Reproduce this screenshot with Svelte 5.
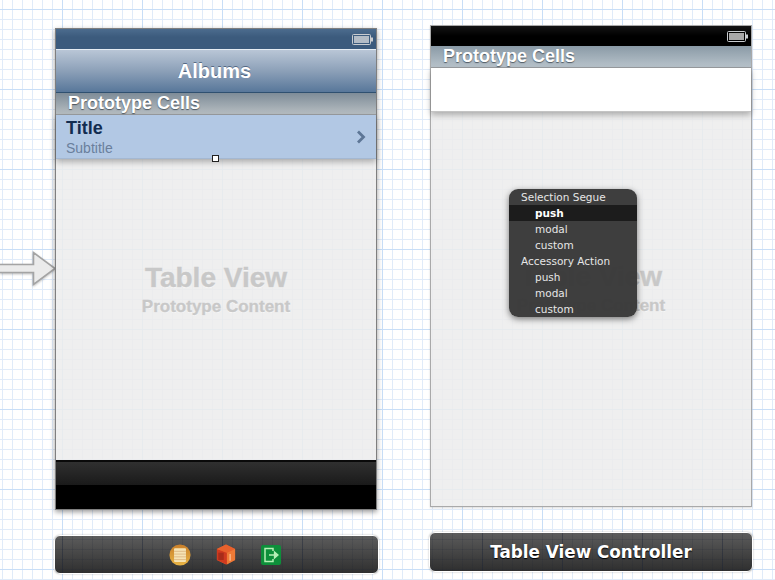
<script>
  const sections = [
    { title: "Selection Segue", items: ["push", "modal", "custom"] },
    { title: "Accessory Action", items: ["push", "modal", "custom"] },
  ];
  let active = "Selection Segue-push";
</script>

{#snippet battery(fill)}
  <svg class="battery" width="21" height="11" viewBox="0 0 21 11">
    <rect x="0.5" y="0.5" width="18" height="10" rx="1" fill="none" stroke="#c9ccd0" />
    <rect x="2" y="2" width="15" height="7" fill={fill} />
    <rect x="19" y="3.5" width="2" height="4" fill="#c9ccd0" />
  </svg>
{/snippet}

<div class="canvas">
  <svg class="entry-arrow" width="58" height="42" viewBox="0 0 58 42">
    <path
      d="M-2 14.5H33.5V2.5L55 18.5 33.5 34.5V22.5H-2Z"
      fill="#ebebeb"
      stroke="#a4a4a4"
      stroke-width="1.6"
    />
  </svg>

  <section class="scene albums">
    <div class="status blue">{@render battery("#b3bcc6")}</div>
    <div class="nav">Albums</div>
    <div class="section-head">Prototype Cells</div>
    <div class="cell selected">
      <div class="cell-text">
        <div class="cell-title">Title</div>
        <div class="cell-sub">Subtitle</div>
      </div>
      <svg width="10" height="14" viewBox="0 0 10 14">
        <path d="M2 1.5 7.5 7 2 12.5" fill="none" stroke="#5d7696" stroke-width="2.8" />
      </svg>
      <span class="handle"></span>
    </div>
    <div class="table">
      <div class="watermark">
        <div class="wm-big">Table View</div>
        <div class="wm-small">Prototype Content</div>
      </div>
    </div>
    <div class="tabbar"></div>
    <div class="tabbar-bottom"></div>
  </section>

  <div class="dock first">
    <svg width="22" height="22" viewBox="0 0 24 24">
      <defs>
        <linearGradient id="coin" x1="0" y1="0" x2="0" y2="1">
          <stop offset="0" stop-color="#c97f2a" />
          <stop offset="1" stop-color="#e8b445" />
        </linearGradient>
      </defs>
      <circle cx="12" cy="12" r="11.5" fill="url(#coin)" />
      <rect x="5.5" y="4.5" width="13" height="15" rx="1" fill="#f6e3b4" />
      <path d="M5.5 8H18.5M5.5 11H18.5M5.5 14H18.5M5.5 17H18.5" stroke="#dcb884" stroke-width="1" />
    </svg>
    <svg width="20" height="23" viewBox="0 0 22 24">
      <path d="M11 1 21 6V18L11 23 1 18V6Z" fill="#e2562a" />
      <path d="M1 6 12 10V23L1 18Z" fill="#cf3a1f" />
      <path d="M11 1 21 6 12 10 1 6Z" fill="#e8612c" />
      <path d="M12 10 21 6V18L12 23Z" fill="#ee7a36" />
      <rect x="2.5" y="10" width="6" height="8" fill="#a82c1a" />
      <path d="M15.5 11.5V19" stroke="#ffc9a0" stroke-width="1.2" />
    </svg>
    <svg width="20" height="20" viewBox="1 1 20 20">
      <rect x="1" y="1" width="20" height="20" rx="2" fill="#0d8f3a" />
      <path d="M13 7V4.5H5V17.5H13V15" fill="none" stroke="#b5f0b5" stroke-width="1.5" />
      <path d="M9 11H15M14.5 8 18 11 14.5 14Z" fill="#b5f0b5" stroke="#b5f0b5" stroke-width="1.3" />
    </svg>
  </div>

  <section class="scene controller">
    <div class="status black">{@render battery("#a8a8a8")}</div>
    <div class="section-head light">Prototype Cells</div>
    <div class="cell plain"></div>
    <div class="table">
      <div class="watermark">
        <div class="wm-big">Table View</div>
        <div class="wm-small">Prototype Content</div>
      </div>
    </div>

    <div class="popup">
      {#each sections as section}
        <div class="popup-title">{section.title}</div>
        {#each section.items as item}
          <div class="popup-item" class:active={active === `${section.title}-${item}`}>{item}</div>
        {/each}
      {/each}
    </div>
  </section>

  <div class="dock second">Table View Controller</div>
</div>

<style>
  :global(body) {
    margin: 0;
    background: #fff;
  }

  .canvas {
    position: relative;
    width: 775px;
    height: 580px;
    overflow: hidden;
    font-family: "Liberation Sans", Arial, sans-serif;
    background-color: #fff;
    background-image:
      linear-gradient(90deg, #c8def7 1px, transparent 1px),
      linear-gradient(#c8def7 1px, transparent 1px),
      linear-gradient(90deg, #e0ebf9 1px, transparent 1px),
      linear-gradient(#e0ebf9 1px, transparent 1px);
    background-size: 80px 80px, 80px 80px, 10px 10px, 10px 10px;
    background-position: 62px 9px, 62px 9px, 2px 9px, 2px 9px;
  }

  .entry-arrow {
    position: absolute;
    left: 0;
    top: 250px;
    filter: drop-shadow(0 1px 1px rgba(0, 0, 0, 0.25));
  }

  .scene {
    position: absolute;
    box-sizing: border-box;
    width: 322px;
    height: 482px;
    display: flex;
    flex-direction: column;
  }

  .albums {
    left: 55px;
    top: 28px;
    border: 1px solid #7f7f7f;
    box-shadow: 0 2px 5px rgba(0, 0, 0, 0.4);
  }

  .controller {
    left: 430px;
    top: 25px;
    border: 1px solid #a9a9a9;
    box-shadow: 0 1px 2px rgba(0, 0, 0, 0.15);
  }

  .status {
    height: 20px;
    flex: none;
    display: flex;
    align-items: center;
    justify-content: flex-end;
    padding-right: 3px;
  }

  .status.blue {
    background: linear-gradient(#4c6c8e, #3c5b7d 40%);
  }

  .status.black {
    background: linear-gradient(#141414, #000 50%);
  }

  .nav {
    box-sizing: border-box;
    height: 44px;
    flex: none;
    border-top: 1px solid #e6edf3;
    border-bottom: 1px solid #2f5070;
    background: linear-gradient(#b9c6d6, #8ca0b8 50%, #58779a);
    color: #fff;
    font-size: 20px;
    font-weight: 700;
    line-height: 42px;
    text-align: center;
    padding-right: 3px;
    text-shadow: 0 -1px 0 rgba(40, 60, 90, 0.6);
  }

  .section-head {
    box-sizing: border-box;
    height: 22px;
    flex: none;
    padding-left: 12px;
    border-bottom: 1px solid #9a9da0;
    background: linear-gradient(#7e8c98, #b6bdc1);
    color: #fff;
    font-size: 18px;
    font-weight: 700;
    line-height: 20px;
    text-shadow: 0 1px 1px rgba(40, 50, 60, 0.7);
  }

  .section-head.light {
    background: linear-gradient(#8a9aa6, #b7c2ca);
  }

  .cell {
    box-sizing: border-box;
    height: 44px;
    flex: none;
    position: relative;
    z-index: 1;
    box-shadow: 0 3px 6px rgba(0, 0, 0, 0.28);
  }

  .cell.selected {
    display: flex;
    align-items: center;
    justify-content: space-between;
    padding: 0 10px;
    background: #b2c8e4;
    border-bottom: 1px solid #a4b8d2;
  }

  .cell.plain {
    background: #fff;
    border-bottom: 1px solid #c4c4c4;
  }

  .cell-title {
    color: #122c50;
    font-size: 18px;
    font-weight: 700;
    line-height: 22px;
  }

  .cell-sub {
    color: #6a7f9c;
    font-size: 14px;
    line-height: 19px;
    margin-bottom: -2px;
  }

  .handle {
    position: absolute;
    left: 156px;
    bottom: -4px;
    box-sizing: border-box;
    width: 7px;
    height: 7px;
    background: #fff;
    border: 1px solid #222;
  }

  .table {
    flex: 1;
    background: rgba(236, 236, 236, 0.86);
  }

  .watermark {
    padding-top: 103px;
    text-align: center;
    color: #c8c8c8;
    font-weight: 700;
    text-shadow: 0 1px 0 rgba(255, 255, 255, 0.6);
  }

  .controller .watermark {
    padding-top: 149px;
  }

  .wm-big {
    font-size: 28px;
    line-height: 32px;
    -webkit-text-stroke: 0.4px #c8c8c8;
  }

  .wm-small {
    font-size: 17px;
    line-height: 25px;
    -webkit-text-stroke: 0.3px #c8c8c8;
  }

  .tabbar {
    height: 25px;
    flex: none;
    box-sizing: border-box;
    border-top: 2px solid #0a0a0a;
    background: linear-gradient(#303030, #1a1a1a);
  }

  .tabbar-bottom {
    height: 24px;
    flex: none;
    background: #000;
  }

  .dock {
    position: absolute;
    box-sizing: border-box;
    display: flex;
    align-items: center;
    justify-content: center;
    border: 1px solid #fff;
    border-radius: 6px;
    background-color: #404040;
    background-image:
      linear-gradient(90deg, rgba(25, 35, 55, 0.32) 1px, transparent 1px),
      linear-gradient(90deg, rgba(25, 35, 55, 0.14) 1px, transparent 1px),
      linear-gradient(rgba(25, 35, 55, 0.14) 1px, transparent 1px),
      linear-gradient(#5c5c5c, #2f2f2f);
    background-size: 80px 100%, 10px 100%, 100% 10px, 100% 100%;
  }

  .dock.first {
    left: 54px;
    top: 535px;
    width: 325px;
    height: 39px;
    gap: 25px;
    padding-left: 17px;
    background-position: 7px 0, 7px 0, 0 3px, 0 0;
    box-shadow: 0 0 2px rgba(0, 0, 0, 0.3);
  }

  .dock.second {
    left: 429px;
    top: 532px;
    width: 324px;
    height: 40px;
    color: #fff;
    font-family: "DejaVu Sans", sans-serif;
    font-size: 16.8px;
    font-weight: 700;
    text-shadow: 0 1px 1px #000;
    background-position: 52px 0, 2px 0, 0 6px, 0 0;
    box-shadow: 0 0 2px rgba(0, 0, 0, 0.3);
  }

  .popup {
    position: absolute;
    left: 78px;
    top: 163px;
    box-sizing: border-box;
    width: 128px;
    height: 128px;
    border-radius: 9px;
    overflow: hidden;
    background: rgba(56, 56, 56, 0.97);
    color: #e6e6e6;
    font-family: "DejaVu Sans", sans-serif;
    font-size: 10.5px;
    line-height: 16px;
    box-shadow: 0 2px 6px rgba(0, 0, 0, 0.5);
  }

  .popup-title {
    padding-left: 12px;
    height: 16px;
  }

  .popup-item {
    padding-left: 26px;
    height: 16px;
  }

  .popup-item.active {
    background: #1c1c1c;
    color: #fff;
    font-weight: 700;
  }
</style>
